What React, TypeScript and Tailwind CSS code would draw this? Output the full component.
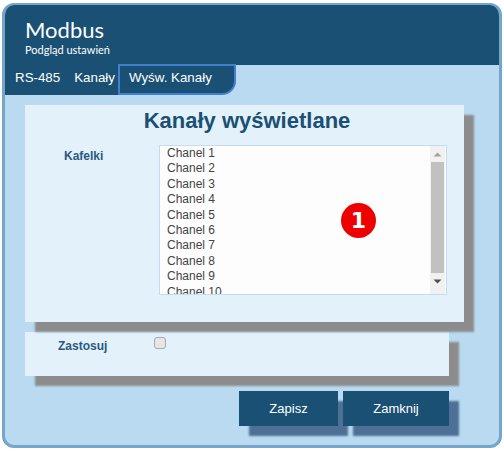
import React from 'react';

const channels = ['Chanel 1', 'Chanel 2', 'Chanel 3', 'Chanel 4', 'Chanel 5', 'Chanel 6', 'Chanel 7', 'Chanel 8', 'Chanel 9', 'Chanel 10'];

const App: React.FC = () => {
  return (
    <div className="w-[504px] h-[454px] bg-white pt-[3px] pl-[2px] font-['Liberation_Sans',sans-serif]">
      <div className="w-[500px] h-[445px] border-[3px] border-t-2 border-[#74a6c9] rounded-[12px] bg-[#b9daf1] overflow-hidden">
        {/* Header */}
        <header className="h-[60px] bg-[#1a5073] pl-[20px] pt-[11px] text-white font-['Lato',sans-serif]">
          <h1 className="text-[22px] leading-[27px]">Modbus</h1>
          <p className="text-[11px] leading-[14px]">Podgląd ustawień</p>
        </header>

        {/* Tabs */}
        <nav className="flex h-[30px] text-white text-[13.33px] whitespace-nowrap">
          <a className="h-[30px] pl-[10px] pr-[14px] pt-[3px] bg-[#1a5073]">RS-485</a>
          <a className="h-[30px] pr-[3px] pt-[3px] bg-[#1a5073]">Kanały</a>
          <a className="w-[118px] h-[31px] -mt-[1px] pl-[9px] pt-[2px] bg-[#1a5073] border-2 border-[#3f80d0] rounded-br-[14px]">Wyśw. Kanały</a>
        </nav>

        {/* Channels panel */}
        <section className="relative w-[439px] h-[217px] ml-[20px] mt-[10px] bg-[#e3f1fb] shadow-[10px_10px_2px_#8c8c8c]">
          <h2 className="text-center pl-[5px] pt-[1px] text-[22px] leading-[30px] font-bold text-[#1a5073]">Kanały wyświetlane</h2>
          <div className="flex mt-[9px]">
            <label className="w-[134px] pl-[39px] pt-[2px] text-[12px] font-bold text-[#2a5a80]">Kafelki</label>
            <div className="flex w-[288px] h-[150px] border border-[#c3dcf3] bg-[#fdfdfd] overflow-hidden">
              <ul className="flex-1 pl-[7px] text-[12px] leading-[15.4px] text-[#444444]">
                {channels.map(c => (
                  <li key={c}>{c}</li>
                ))}
              </ul>
              <div className="flex flex-col items-center w-[15px] mr-[1px] bg-[#f1f1f1]">
                <svg className="mt-[6px]" width="9" height="5" viewBox="0 0 9 5"><path d="M4.5 0.5 L8.5 4.5 H0.5 Z" fill="#a3a3a3" /></svg>
                <div className="w-[13px] h-[111px] mt-[5px] bg-[#c1c1c1]" />
                <svg className="mt-[6px]" width="9" height="5" viewBox="0 0 9 5"><path d="M4.5 4.5 L8.5 0.5 H0.5 Z" fill="#505050" /></svg>
              </div>
            </div>
          </div>
          <div className="absolute left-[316px] top-[98px] flex items-center justify-center w-[35px] h-[35px] rounded-full bg-[#ee0000] text-white text-[22px] font-bold font-['DejaVu_Sans',sans-serif]">1</div>
        </section>

        {/* Apply panel */}
        <section className="flex w-[424px] h-[44px] ml-[20px] mt-[10px] bg-[#e3f1fb] shadow-[10px_10px_2px_#8c8c8c]">
          <label className="w-[129px] pl-[33px] pt-[5px] text-[12px] font-bold text-[#2a5a80]">Zastosuj</label>
          <div className="w-[12px] h-[12px] mt-[5px] rounded-[3px] border border-[#a9a9a9] bg-[#e6e6e6]" />
        </section>

        {/* Buttons */}
        <div className="flex justify-end gap-[5px] w-[444px] mt-[15px]">
          <button className="w-[99px] h-[35px] bg-[#1a5073] text-white text-[13px] shadow-[10px_10px_2px_#4f7096]">Zapisz</button>
          <button className="w-[106px] h-[35px] bg-[#1a5073] text-white text-[13px] shadow-[10px_10px_2px_#4f7096]">Zamknij</button>
        </div>
      </div>
    </div>
  );
};

export default App;
